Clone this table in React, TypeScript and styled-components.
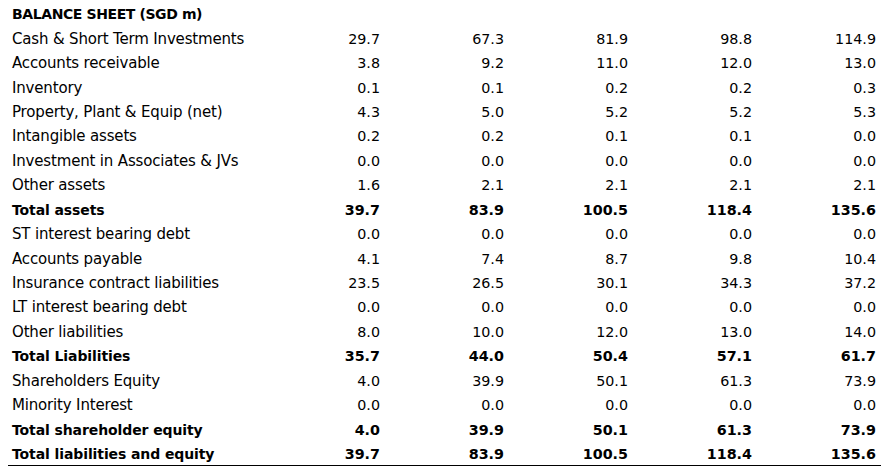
import * as React from 'react';
import styled, { createGlobalStyle } from 'styled-components';

const GlobalStyle = createGlobalStyle`
  html, body {
    margin: 0;
    padding: 0;
    background: #ffffff;
  }
  body {
    padding: 2px 0 0 8px;
    font-family: 'DejaVu Sans', 'Liberation Sans', sans-serif;
    color: #000000;
  }
`;

const Sheet = styled.div`
  display: grid;
  grid-template-columns: 253px repeat(5, 124px);
  width: 873px;
  font-size: 14px;
`;

const Row = styled.div<{ $bold?: boolean; $last?: boolean }>`
  display: contents;
  font-weight: ${(props) => (props.$bold ? 700 : 400)};

  & > div {
    border-bottom: ${(props) => (props.$last ? '1px solid #000' : '0')};
    height: ${(props) => (props.$last ? '23.45px' : '24.45px')};
  }
`;

const Label = styled.div<{ $bold?: boolean }>`
  display: flex;
  align-items: center;
  padding-left: 4px;
  white-space: nowrap;
  font-size: ${(props) => (props.$bold ? '14px' : '15px')};
  letter-spacing: ${(props) => (props.$bold ? '-0.1px' : '-0.17px')};
`;

const Title = styled(Label)`
  font-size: 14px;
  letter-spacing: -0.4px;
`;

const Value = styled.div`
  display: flex;
  align-items: center;
  justify-content: flex-end;
  padding-right: 5px;
  font-size: 14.3px;
`;

type Line = {
  label: string;
  values: string[];
  bold?: boolean;
};

const zeros = ['0.0', '0.0', '0.0', '0.0', '0.0'];

const lines: Line[] = [
  { label: 'Cash & Short Term Investments', values: ['29.7', '67.3', '81.9', '98.8', '114.9'] },
  { label: 'Accounts receivable', values: ['3.8', '9.2', '11.0', '12.0', '13.0'] },
  { label: 'Inventory', values: ['0.1', '0.1', '0.2', '0.2', '0.3'] },
  { label: 'Property, Plant & Equip (net)', values: ['4.3', '5.0', '5.2', '5.2', '5.3'] },
  { label: 'Intangible assets', values: ['0.2', '0.2', '0.1', '0.1', '0.0'] },
  { label: 'Investment in Associates & JVs', values: zeros },
  { label: 'Other assets', values: ['1.6', '2.1', '2.1', '2.1', '2.1'] },
  { label: 'Total assets', values: ['39.7', '83.9', '100.5', '118.4', '135.6'], bold: true },
  { label: 'ST interest bearing debt', values: zeros },
  { label: 'Accounts payable', values: ['4.1', '7.4', '8.7', '9.8', '10.4'] },
  { label: 'Insurance contract liabilities', values: ['23.5', '26.5', '30.1', '34.3', '37.2'] },
  { label: 'LT interest bearing debt', values: zeros },
  { label: 'Other liabilities', values: ['8.0', '10.0', '12.0', '13.0', '14.0'] },
  { label: 'Total Liabilities', values: ['35.7', '44.0', '50.4', '57.1', '61.7'], bold: true },
  { label: 'Shareholders Equity', values: ['4.0', '39.9', '50.1', '61.3', '73.9'] },
  { label: 'Minority Interest', values: zeros },
  { label: 'Total shareholder equity', values: ['4.0', '39.9', '50.1', '61.3', '73.9'], bold: true },
  { label: 'Total liabilities and equity', values: ['39.7', '83.9', '100.5', '118.4', '135.6'], bold: true },
];

export default function App() {
  return (
    <React.Fragment>
      <GlobalStyle />
      <Sheet>
        <Row $bold>
          <Title $bold>BALANCE SHEET (SGD m)</Title>
          {[0, 1, 2, 3, 4].map((i) => <Value key={i} />)}
        </Row>
        {lines.map((line, idx) => (
          <Row key={idx} $bold={line.bold} $last={idx === lines.length - 1}>
            <Label $bold={line.bold}>{line.label}</Label>
            {line.values.map((v, i) => <Value key={i}>{v}</Value>)}
          </Row>
        ))}
      </Sheet>
    </React.Fragment>
  );
}
